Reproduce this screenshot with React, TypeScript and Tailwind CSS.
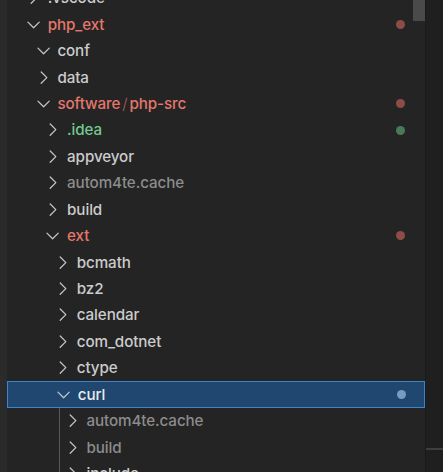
import React from "react";

type Row = {
  name: React.ReactNode;
  level: number;
  open?: boolean;
  color: string;
  dot?: string;
  selected?: boolean;
};

const PL: Record<number, string> = {
  1: "pl-[17px]",
  2: "pl-[26.7px]",
  3: "pl-[36.4px]",
  4: "pl-[46.1px]",
  5: "pl-[55.8px]",
};

const Chevron = ({ open }: { open?: boolean }) => (
  <svg width="19.2" height="19.2" viewBox="0 0 16 16" fill="none" className="shrink-0">
    {open ? (
      <polyline points="3.3,5.9 8,10.6 12.7,5.9" stroke="#c5c5c5" strokeWidth="1.05" strokeLinecap="round" strokeLinejoin="round" />
    ) : (
      <polyline points="6,3.3 10.7,8 6,12.7" stroke="#c5c5c5" strokeWidth="1.05" strokeLinecap="round" strokeLinejoin="round" />
    )}
  </svg>
);

const rows: Row[] = [
  { name: ".vscode", level: 1, color: "text-[#cccccc]" },
  { name: "php_ext", level: 1, open: true, color: "text-[#e5776b]", dot: "bg-[#8e4c44]" },
  { name: "conf", level: 2, open: true, color: "text-[#cccccc]" },
  { name: "data", level: 2, color: "text-[#cccccc]" },
  {
    name: (
      <>
        software<span className="mx-[2px] opacity-70 font-light">/</span>php-src
      </>
    ),
    level: 2,
    open: true,
    color: "text-[#e5776b]",
    dot: "bg-[#8e4c44]",
  },
  { name: ".idea", level: 3, color: "text-[#73c991]", dot: "bg-[#4a7a55]" },
  { name: "appveyor", level: 3, color: "text-[#cccccc]" },
  { name: "autom4te.cache", level: 3, color: "text-[#8c8c8c]" },
  { name: "build", level: 3, color: "text-[#cccccc]" },
  { name: "ext", level: 3, open: true, color: "text-[#e5776b]", dot: "bg-[#8e4c44]" },
  { name: "bcmath", level: 4, color: "text-[#cccccc]" },
  { name: "bz2", level: 4, color: "text-[#cccccc]" },
  { name: "calendar", level: 4, color: "text-[#cccccc]" },
  { name: "com_dotnet", level: 4, color: "text-[#cccccc]" },
  { name: "ctype", level: 4, color: "text-[#cccccc]" },
  { name: "curl", level: 4, open: true, color: "text-[#ebebeb]", dot: "bg-[#7a9bbd]", selected: true },
  { name: "autom4te.cache", level: 5, color: "text-[#8c8c8c]" },
  { name: "build", level: 5, color: "text-[#8c8c8c]" },
  { name: "include", level: 5, color: "text-[#cccccc]" },
];

export default function App() {
  return (
    <div
      className="w-[443px] h-[472px] overflow-hidden flex bg-[#242425] text-[15.2px] font-medium"
      style={{ fontFamily: "Inter, 'Noto Sans', sans-serif" }}
    >
      <div className="w-[7px] shrink-0 bg-[#2b2b2c]" />
      <div className="relative flex-1 min-w-0">
        <div className="mt-[-15.4px] flex flex-col">
          {rows.map((r, i) => (
            <div
              key={i}
              className={`relative h-[26.44px] shrink-0 flex items-center ${PL[r.level]} ${
                r.selected ? "bg-[#1f4770] border border-[#3d83ca]" : ""
              }`}
            >
              {r.level === 5 && (
                <div className="absolute left-[52px] top-0 bottom-0 w-px bg-[#585858]" />
              )}
              <Chevron open={r.open} />
              <span className={`ml-[4.5px] whitespace-nowrap leading-none tracking-[-0.1px] ${r.color}`}>{r.name}</span>
              {r.dot && (
                <div className={`absolute left-[388.5px] w-[9px] h-[9px] rounded-full ${r.dot}`} />
              )}
            </div>
          ))}
        </div>
        <div className="absolute right-0 top-0 w-[12px] h-[21px] bg-[#4a4a4a]" />
      </div>
      <div className="w-[18px] shrink-0 bg-[#1f1f20] border-l border-[#1a1a1a] flex flex-col">
        <div className="h-[448px]" />
        <div className="h-[2px] bg-[#3e3e3e]" />
      </div>
    </div>
  );
}
